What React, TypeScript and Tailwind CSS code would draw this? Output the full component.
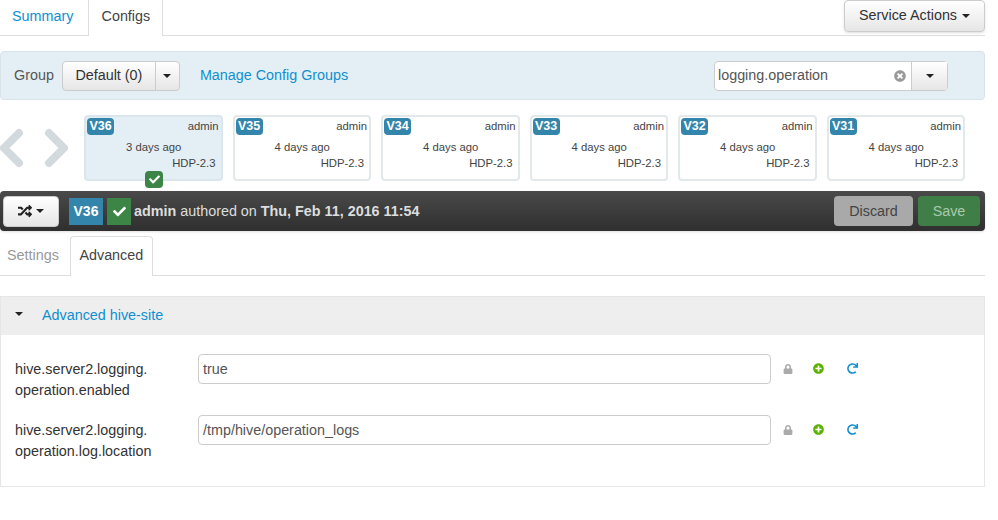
import { FaCheck, FaRandom, FaLock, FaRedo, FaPlusCircle, FaTimesCircle } from 'react-icons/fa'

const versions = [
  { id: 'V36', when: '3 days ago', current: true },
  { id: 'V35', when: '4 days ago' },
  { id: 'V34', when: '4 days ago' },
  { id: 'V33', when: '4 days ago' },
  { id: 'V32', when: '4 days ago' },
  { id: 'V31', when: '4 days ago' },
]

const props = [
  { name: ['hive.server2.logging.', 'operation.enabled'], value: 'true' },
  { name: ['hive.server2.logging.', 'operation.log.location'], value: '/tmp/hive/operation_logs' },
]

const Caret = ({ className = 'border-t-[#222]' }: { className?: string }) => (
  <span className={`inline-block h-0 w-0 border-x-[4px] border-t-[4px] border-x-transparent ${className}`} />
)

function VersionCard({ id, when, current }: { id: string; when: string; current?: boolean }) {
  return (
    <div className={`relative h-[66px] w-[138.5px] rounded border-2 pt-[1px] pr-[2px] pl-[1px] text-[11.3px] text-[#444] ${current ? 'border-[#dbe6ec] bg-[#e4eff5]' : 'border-[#e3e8eb] bg-white'}`}>
      <div className="flex items-start justify-between">
        <span className="flex h-[17px] w-[27px] items-center justify-center rounded-sm bg-[#3385ab] text-[12.5px] font-bold text-white">{id}</span>
        <span className="leading-[17px]">admin</span>
      </div>
      <div className="mt-[4px] pl-[2px] text-center leading-[17px]">{when}</div>
      <div className="mt-[-1px] pr-[3px] text-right leading-[17px]">HDP-2.3</div>
      {current && (
        <span className="absolute bottom-[-9px] left-[59px] flex h-[17px] w-[18px] items-center justify-center rounded-sm bg-[#3d8447]">
          <FaCheck size={11} className="text-white" />
        </span>
      )}
    </div>
  )
}

export default function App() {
  return (
    <div className="h-[520px] w-[998px] bg-white pr-[13px] font-['Liberation_Sans',sans-serif] text-[14.35px] text-[#333]">
      {/* Top tabs */}
      <div className="flex h-[36px] items-start justify-between border-b border-[#ddd]">
        <div className="flex">
          <a className="pl-3 pt-[6px] text-[#0f8fd0]">Summary</a>
          <div className="ml-[15px] h-[36px] w-[75px] border-x border-[#ddd] bg-white pt-[6px] text-center text-[#444]">Configs</div>
        </div>
        <button className="flex h-[32px] w-[141px] items-center justify-center gap-[5px] rounded border border-[#ccc] bg-gradient-to-b from-white to-[#e6e6e6] pb-[1px] text-[#333] shadow-sm">
          Service Actions <Caret />
        </button>
      </div>

      {/* Group bar */}
      <div className="mt-[15px] flex h-[49px] items-center rounded border border-[#d8e4ea] bg-[#e4eff5] pl-[13px]">
        <span className="text-[#555]">Group</span>
        <div className="ml-[8px] flex h-[30px] rounded border border-[#ccc] bg-gradient-to-b from-white to-[#e6e6e6]">
          <span className="flex w-[93px] items-center justify-center border-r border-[#ccc] text-[#333]">Default (0)</span>
          <span className="flex w-[23px] items-center justify-center"><Caret /></span>
        </div>
        <a className="ml-[20px] text-[#0f8fd0]">Manage Config Groups</a>
        <div className="ml-auto mr-[36px] flex h-[30px] w-[234px] rounded border border-[#ccc] bg-white">
          <div className="flex flex-1 items-center justify-between border-r border-[#ccc] pl-[3px] pr-[5px] text-[#555]">
            <span>logging.operation</span>
            <FaTimesCircle size={12} className="text-[#999]" />
          </div>
          <span className="flex w-[35px] items-center justify-center bg-gradient-to-b from-white to-[#e6e6e6]"><Caret /></span>
        </div>
      </div>

      {/* Version ribbon */}
      <div className="mt-[15px] flex h-[66px] items-center">
        <div className="flex w-[84px] items-center pb-[1px]">
          <svg width="69" height="40" viewBox="0 0 69 40" fill="none" stroke="#d3dadd" strokeWidth="8" strokeLinecap="round" strokeLinejoin="round">
            <path d="M19 5L4 20l15 15" />
            <path d="M49 5l15 15-15 15" />
          </svg>
        </div>
        <div className="flex gap-[10px]">
          {versions.map(v => <VersionCard key={v.id} {...v} />)}
        </div>
      </div>

      {/* Dark action bar */}
      <div className="mt-[10px] flex h-[40px] items-center rounded bg-gradient-to-b from-[#4a4a4a] to-[#2f2f2f] pl-[3px] pr-[5px] text-[#ddd] shadow-sm">
        <button className="flex h-[31px] w-[56px] items-center justify-center gap-[4px] rounded border border-[#ccc] bg-gradient-to-b from-white to-[#e6e6e6]">
          <FaRandom size={14} className="text-[#222]" /><Caret />
        </button>
        <span className="ml-[10px] flex h-[27px] w-[34px] items-center justify-center bg-[#3385ab] text-[14px] font-bold text-white">V36</span>
        <span className="ml-[4px] flex h-[27px] w-[24px] items-center justify-center bg-[#3d8447]">
          <FaCheck size={13} className="text-white" />
        </span>
        <span className="ml-[3px] pt-[1px]"><b>admin</b> authored on <b>Thu, Feb 11, 2016 11:54</b></span>
        <button className="ml-auto h-[30px] w-[79px] rounded bg-[#a9a9a9] pt-[1px] text-[#444]">Discard</button>
        <button className="ml-[5px] h-[30px] w-[62px] rounded bg-[#3f7f47] pt-[1px] text-[#a9c9ad]">Save</button>
      </div>

      {/* Sub tabs */}
      <div className="mt-[5px] flex h-[40px] border-b border-[#ddd]">
        <span className="pl-[7px] pt-[9px] text-[#999]">Settings</span>
        <span className="ml-[11px] h-[40px] w-[83px] rounded-t border-x border-t border-[#ddd] bg-white pt-[8px] text-center text-[#444]">Advanced</span>
      </div>

      {/* Advanced panel */}
      <div className="mt-[20px] h-[191px] border border-[#e6e6e6]">
        <div className="flex h-[38px] items-center bg-[#eeeeee] pl-[14px]">
          <Caret className="mb-[4px] border-t-[#222]" />
          <a className="ml-[19px] text-[#0f8fd0]">Advanced hive-site</a>
        </div>
        <div className="flex flex-col gap-[31px] pt-[19px]">
          {props.map(p => (
            <div key={p.value} className="flex h-[30px] items-start">
              <div className="w-[197px] pl-[14px] pt-[5px] leading-[21px] text-[#333]">
                {p.name[0]}<br />{p.name[1]}
              </div>
              <div className="flex h-[30px] w-[573px] items-center rounded-sm border border-[#ccc] pl-1 pt-[1px] text-[#555]">{p.value}</div>
              <div className="flex h-[30px] items-center pb-[1px]">
                <FaLock size={10} className="ml-[12px] text-[#aaa]" />
                <FaPlusCircle size={11} className="ml-[20px] text-[#5cb000]" />
                <FaRedo size={11} className="ml-[23px] text-[#0f8fd0]" />
              </div>
            </div>
          ))}
        </div>
      </div>
    </div>
  )
}
